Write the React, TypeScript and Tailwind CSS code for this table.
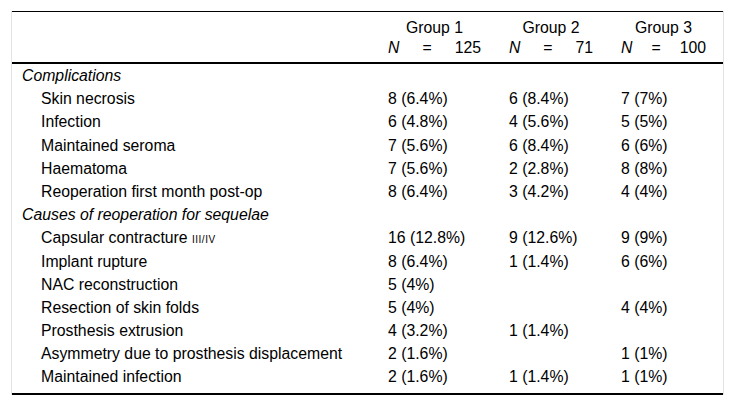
import React from "react"

type Row =
    | { kind: "section"; label: string }
    | { kind: "item"; label: React.ReactNode; g1?: string; g2?: string; g3?: string }

const rows: Row[] = [
    { kind: "section", label: "Complications" },
    { kind: "item", label: "Skin necrosis", g1: "8 (6.4%)", g2: "6 (8.4%)", g3: "7 (7%)" },
    { kind: "item", label: "Infection", g1: "6 (4.8%)", g2: "4 (5.6%)", g3: "5 (5%)" },
    { kind: "item", label: "Maintained seroma", g1: "7 (5.6%)", g2: "6 (8.4%)", g3: "6 (6%)" },
    { kind: "item", label: "Haematoma", g1: "7 (5.6%)", g2: "2 (2.8%)", g3: "8 (8%)" },
    { kind: "item", label: "Reoperation first month post-op", g1: "8 (6.4%)", g2: "3 (4.2%)", g3: "4 (4%)" },
    { kind: "section", label: "Causes of reoperation for sequelae" },
    {
        kind: "item",
        label: (
            <>
                Capsular contracture <span className="text-[10px] tracking-[0.5px]">III/IV</span>
            </>
        ),
        g1: "16 (12.8%)",
        g2: "9 (12.6%)",
        g3: "9 (9%)",
    },
    { kind: "item", label: "Implant rupture", g1: "8 (6.4%)", g2: "1 (1.4%)", g3: "6 (6%)" },
    { kind: "item", label: "NAC reconstruction", g1: "5 (4%)" },
    { kind: "item", label: "Resection of skin folds", g1: "5 (4%)", g3: "4 (4%)" },
    { kind: "item", label: "Prosthesis extrusion", g1: "4 (3.2%)", g2: "1 (1.4%)" },
    { kind: "item", label: "Asymmetry due to prosthesis displacement", g1: "2 (1.6%)", g3: "1 (1%)" },
    { kind: "item", label: "Maintained infection", g1: "2 (1.6%)", g2: "1 (1.4%)", g3: "1 (1%)" },
]

const groups = [
    { name: "Group 1", n: "125" },
    { name: "Group 2", n: "71" },
    { name: "Group 3", n: "100" },
]

const cols = "grid grid-cols-[365px_121px_112px_113px]"

export default function App() {
    return (
        <div className="w-[734px] h-[407px] bg-white pt-[11px] pl-[11px] font-['Liberation_Sans',Arial,sans-serif] text-[15.8px] text-black">
            <div className="w-[713px] border-x border-[#e3e3e3]">
                {/* header */}
                <div className={`${cols} border-t border-black border-b-2 pt-[6px] pb-[4px] leading-[20px]`}>
                    <div />
                    {groups.map((g) => (
                        <div key={g.name} className="pl-[11px] pr-[17px]">
                            <div className="text-center">{g.name}</div>
                            <div className="flex justify-between">
                                <span className="italic">N</span>
                                <span>=</span>
                                <span>{g.n}</span>
                            </div>
                        </div>
                    ))}
                </div>

                {/* body */}
                <div className="border-b-2 border-black pb-[4px]">
                    {rows.map((row, i) =>
                        row.kind === "section" ? (
                            <div key={i} className="h-[23.2px] leading-[23.2px] pl-[10px] italic">
                                {row.label}
                            </div>
                        ) : (
                            <div key={i} className={`${cols} h-[23.2px] leading-[23.2px]`}>
                                <div className="pl-[29px] whitespace-nowrap">{row.label}</div>
                                <div className="pl-[11px]">{row.g1}</div>
                                <div className="pl-[11px]">{row.g2}</div>
                                <div className="pl-[11px]">{row.g3}</div>
                            </div>
                        )
                    )}
                </div>
            </div>
        </div>
    )
}
